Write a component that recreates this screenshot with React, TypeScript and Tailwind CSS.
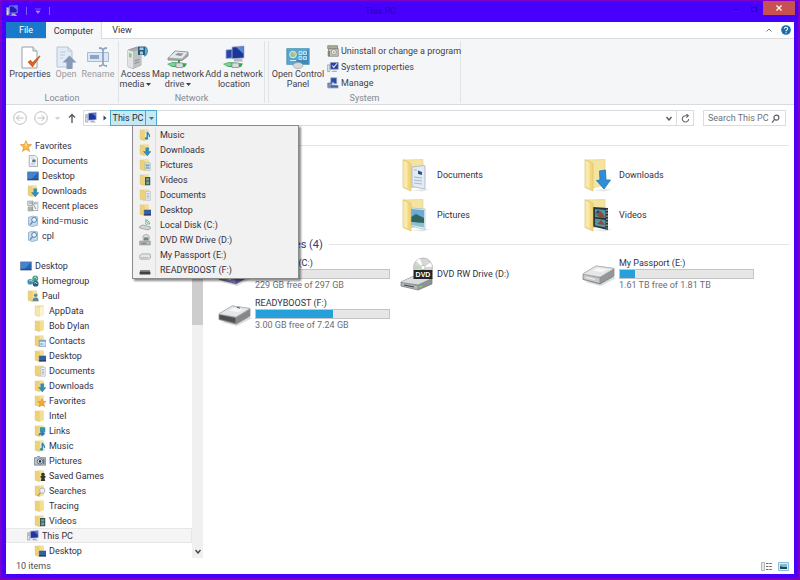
import React from 'react';

type Badge =
  | 'none'
  | 'plain'
  | 'music'
  | 'down'
  | 'picture'
  | 'video'
  | 'doc'
  | 'desktop'
  | 'contact'
  | 'star'
  | 'link'
  | 'game'
  | 'search'
  | 'user';

const BADGES: Record<Badge, React.ReactNode> = {
  none: null,
  plain: null,
  music: (
    <g>
      <path d="M8.500 3l6 1v11l-6-1z" fill="#dcecf2" />
      <path d="M11 12V4c1 2.500 3.500 3 3 6.500" fill="none" stroke="#2f7fa0" strokeWidth="1.800" />
      <ellipse cx="10" cy="12.500" rx="2.200" ry="1.800" fill="#3d8f9c" />
    </g>
  ),
  down: <path d="M9 5h4v5h3l-5 6-5-6h3z" fill="#2f8fb8" stroke="#2374a0" strokeWidth=".5" />,
  picture: (
    <g>
      <path d="M8 5h7v10H8z" fill="#e6f0f5" stroke="#8ca5b4" strokeWidth=".7" />
      <path d="M9 7h5v3H9z" fill="#6fa9c9" />
      <path d="M9 11h5v2H9z" fill="#7f9d8c" />
    </g>
  ),
  video: (
    <g>
      <path d="M8 4h7v11H8z" fill="#39535a" />
      <path d="M9.500 5.500h4v3h-4zM9.500 10h4v3.500h-4z" fill="#6fa59a" />
    </g>
  ),
  doc: (
    <g>
      <path d="M9 3h6v12H9z" fill="#eef1f5" stroke="#9aa5b5" strokeWidth=".7" />
      <path d="M10.500 6h3M10.500 8h3M10.500 10h3M10.500 12h3" stroke="#8494aa" strokeWidth=".8" />
    </g>
  ),
  desktop: (
    <g>
      <path d="M7 8h9v7H7z" fill="#2e61ae" stroke="#3e4c74" strokeWidth=".7" />
      <path d="M7 13.500h9V15H7z" fill="#30395c" />
    </g>
  ),
  contact: (
    <g>
      <path d="M7 7h9v8H7z" fill="#eaf4fb" stroke="#5f8ebc" />
      <path d="M7 7h9v2H7z" fill="#6fa3d4" />
      <path d="M9 11h2v2H9zM12.500 11h2M12.500 13h2" fill="#6fa3d4" stroke="#6fa3d4" strokeWidth=".6" />
    </g>
  ),
  star: (
    <path
      d="M10.500 5l1.500 3.500 4 .3-3 2.600 1 4-3.500-2-3.500 2 1-4-3-2.600 4-.3z"
      fill="#f4a83c"
      stroke="#c77a20"
      strokeWidth=".6"
    />
  ),
  link: (
    <g>
      <path d="M8 3h7v7H8z" fill="#3a93ad" />
      <path d="M6 15c0-4 2-5 4-5V7.500l5 4-5 4V13c-2 0-3 .5-4 2z" fill="#2f78bd" />
    </g>
  ),
  game: (
    <path
      d="M12 3.500c1.500 0 2.500 1 2.500 2.200l-.8 1.800 2.300 1.500-2 2 1 3.500H9l1-3.500-2-2 2.300-1.500-.8-1.800C9.500 4.500 10.500 3.500 12 3.500z"
      fill="#37352f"
    />
  ),
  search: (
    <g>
      <circle cx="11" cy="7.500" r="3.600" fill="#e4eef5" stroke="#a9adb0" strokeWidth="1.200" />
      <path d="M8.500 10.500L5 14.500" stroke="#b99368" strokeWidth="1.800" />
    </g>
  ),
  user: (
    <g>
      <path d="M8 4h7v11H8z" fill="#dfe6d8" />
      <circle cx="11.500" cy="7" r="2.300" fill="#6d8c78" />
      <path d="M7.500 15c0-4 1.500-5 4-5s4 1 4 5z" fill="#5b8a96" />
    </g>
  ),
};

const Folder = ({ badge = 'none' }: { badge?: Badge }) => (
  <svg viewBox="0 0 16 16" className="size-3 shrink-0" aria-hidden="true">
    <path d="M5 1h7.500v12L5 14z" fill="#f6e6a2" stroke="#dcc478" strokeWidth=".5" />
    <path d="M1.500 1l6 2v12.500l-6-2z" fill={badge === 'plain' ? '#f5e7b4' : '#edd277'} stroke="#d2b65e" strokeWidth=".5" />
    <path d="M7.500 3L13 2.300v11.500L7.500 15.500z" fill={badge === 'plain' ? '#fbf3d3' : '#f3df92'} />
    {BADGES[badge]}
  </svg>
);

const StarIcon = () => (
  <svg viewBox="0 0 16 16" className="size-3 shrink-0" aria-hidden="true">
    <path
      d="M8 .8l2 5 5.500.4-4.200 3.500 1.400 5.500L8 12.200l-4.700 3 1.400-5.500L.5 6.200 6 5.800z"
      fill="#fbbc45"
      stroke="#d98a28"
      strokeWidth=".8"
    />
    <path d="M8 3l1.200 3.400L8 9 6.600 6.500z" fill="#fde39a" />
  </svg>
);

const DesktopIcon = () => (
  <svg viewBox="0 0 16 16" className="size-3 shrink-0" aria-hidden="true">
    <path d="M.5 2.500h15v11H.5z" fill="#2a62ac" stroke="#7e94b4" />
    <path d="M1 3h14L6 12H1z" fill="#4384cb" />
    <path d="M1 11.800h14V13H1z" fill="#2b3f66" />
  </svg>
);

const DocIcon = () => (
  <svg viewBox="0 0 16 16" className="size-3 shrink-0" aria-hidden="true">
    <path d="M3 .8h8l3 3v11.500H3z" fill="#f4f7fa" stroke="#8b97a6" />
    <path d="M5 4h5M5 11h6M5 13h6" stroke="#9eacba" strokeWidth=".8" />
    <path d="M7 6h4.500v3.500H7z" fill="#55768c" />
  </svg>
);

const RecentIcon = () => (
  <svg viewBox="0 0 16 16" className="size-3 shrink-0" aria-hidden="true">
    <path d="M1 1.500h7v6H1z" fill="#e1e5e6" stroke="#8d9598" />
    <path d="M7 3h7.500v11H7z" fill="#f3f5f5" stroke="#9aa2a5" />
    <path d="M1.500 9.500h6v5h-6z" fill="#c7cdcf" stroke="#868e92" />
    <path d="M3 4h4l2 3 3 5M9 5h4M3 12h4" fill="none" stroke="#6f797d" />
  </svg>
);

const SavedSearchIcon = () => (
  <svg viewBox="0 0 16 16" className="size-3 shrink-0" aria-hidden="true">
    <path d="M2 3l6-1.500 6 1v11l-7 2-5-2z" fill="#c5dcef" stroke="#86a7c8" />
    <circle cx="9.500" cy="6.500" r="3.200" fill="#eef6fc" stroke="#4f7daa" strokeWidth="1.300" />
    <path d="M7.500 9L4 13" stroke="#6c8fb2" strokeWidth="1.700" />
  </svg>
);

const HomegroupIcon = () => (
  <svg viewBox="0 0 16 16" className="size-3 shrink-0" aria-hidden="true">
    <circle cx="4.300" cy="9" r="3.800" fill="#3d8fb4" />
    <circle cx="11" cy="4.500" r="3.900" fill="#4a9e83" />
    <circle cx="11.500" cy="11.500" r="3.900" fill="#235f80" />
    <path d="M3 8c2-2 3-1 4 1M9 4c2-2 3-1 4 1M9.500 11c2-2 3-1 4 1" fill="none" stroke="#d8eff2" strokeWidth="1.200" />
  </svg>
);

const CameraIcon = () => (
  <svg viewBox="0 0 16 16" className="size-3 shrink-0" aria-hidden="true">
    <path d="M.5 3.500h3l1-1.500h3l1 1.500h7v10H.5z" fill="#b4c3cd" stroke="#6f7f8c" />
    <circle cx="8" cy="8.500" r="3.600" fill="#f0f4f6" stroke="#3b4b57" />
    <circle cx="8" cy="8.500" r="1.700" fill="#26343f" />
    <path d="M13 5v7" stroke="#4f5f6b" strokeWidth="1.500" />
  </svg>
);

const PcIcon = ({ screen = '#20369e' }: { screen?: string }) => (
  <svg viewBox="0 0 16 16" className="size-3 shrink-0" aria-hidden="true">
    <path d="M.8 3.500h3v10h-3z" fill="#dfe3ea" stroke="#8a90a4" strokeWidth=".8" />
    <path d="M1.500 5.500h1.600M1.500 7h1.600" stroke="#6d758e" strokeWidth=".7" />
    <path d="M4.500 1.500L15 .8v9.500l-10.500.7z" fill={screen} stroke="#b7bdd8" strokeWidth=".8" />
    <path d="M9 1.700l5.500-.4v5z" fill="#5a7fd8" />
    <path d="M8 11.300h4l1.500 2.500H7z" fill="#a9b0c4" />
    <path d="M4 14.200l9.500-.4 1.500 1H5z" fill="#c9cddb" />
  </svg>
);

const LocalDiskIcon = () => (
  <svg viewBox="0 0 16 16" className="size-3 shrink-0" aria-hidden="true">
    <path d="M1 10l4-2 10 2.500v2.500l-3 1.500L1 12z" fill="#d5d8da" stroke="#7c8286" strokeWidth=".8" />
    <path d="M8 6c1 0 2 .8 2 2M8 3.500c2.500 0 4 1.500 4 4M8 1.200c4 0 6 2.500 6 6" fill="none" stroke="#3da353" strokeWidth="1.100" />
  </svg>
);

const DvdSmallIcon = () => (
  <svg viewBox="0 0 16 16" className="size-3 shrink-0" aria-hidden="true">
    <circle cx="9.500" cy="5" r="4.500" fill="#d8dcdd" stroke="#8c9396" strokeWidth=".8" />
    <path d="M6.500 4.500h6v3.500h-6z" fill="#7b8285" />
    <path d="M1 9.500h14v5H1z" fill="#b9bec1" stroke="#777e82" strokeWidth=".8" />
    <path d="M3 12.300h7" stroke="#51575b" />
  </svg>
);

const PassportSmallIcon = () => (
  <svg viewBox="0 0 16 16" className="size-3 shrink-0" aria-hidden="true">
    <path d="M1 8.500l3-2h10.500l.7 2V12l-2 1.500H2L1 12z" fill="#e3e5e6" stroke="#8b9093" strokeWidth=".9" />
    <path d="M2.500 11.500h10" stroke="#abb0b3" />
  </svg>
);

const StickSmallIcon = () => (
  <svg viewBox="0 0 16 16" className="size-3 shrink-0" aria-hidden="true">
    <path d="M2.500 8h11l1.700 2.500V14H.8v-3.500z" fill="#3e4144" />
    <path d="M2.500 8h11l1.500 2.300H1z" fill="#85898c" />
  </svg>
);

/* ---------- ribbon drawings ---------- */

const PropertiesIcon = () => (
  <svg viewBox="0 0 24 24" className="size-6" aria-hidden="true">
    <path d="M4 2h11l4 4v17H4z" fill="#fff" stroke="#9aa0a6" />
    <path d="M15 2v4h4" fill="#e8ebee" stroke="#9aa0a6" />
    <path d="M10.500 17l4 4.500L22 11l-7.500 7-2-2.500z" fill="#dd7038" stroke="#c4602e" strokeWidth="1.200" />
  </svg>
);

const OpenIcon = () => (
  <svg viewBox="0 0 24 24" className="size-6" aria-hidden="true">
    <path d="M3 2h11l4 4v16H3z" fill="#e2ebf6" stroke="#b4c4da" />
    <path d="M14 2v4h4M6 7h6M6 10h5M6 13h3" fill="none" stroke="#b9c8dc" />
    <path d="M15.500 10.500l7 7h-4V24h-6v-6.500h-4z" fill="#8599b8" />
  </svg>
);

const RenameIcon = () => (
  <svg viewBox="0 0 24 24" className="size-6" aria-hidden="true">
    <path d="M1.500 7.500h21v9h-21z" fill="#dbe7f4" stroke="#a9bcd4" />
    <path d="M4 10h9v4H4z" fill="#8ca5c6" />
    <path d="M13 3c2 0 3 .3 4 1.500C18 3.300 19 3 21 3M17 4.500v15M13 21c2 0 3-.3 4-1.500 1 1.200 2 1.500 4 1.500" fill="none" stroke="#8da4c4" strokeWidth="1.800" />
  </svg>
);

const AccessMediaIcon = () => (
  <svg viewBox="0 0 24 24" className="size-6" aria-hidden="true">
    <path d="M4 5l9-3 4 2v16l-8 3.500-5-2z" fill="#a9acae" stroke="#85888a" strokeWidth=".7" />
    <path d="M4 5l5 1.500v17l-5-2z" fill="#e1e3e4" />
    <path d="M9 6.500L17 4v16l-8 3.500z" fill="#bfc2c3" />
    <path d="M10.500 16l5-1.700M10.500 18.500l5-1.700" stroke="#8a8d8f" />
    <path d="M5 8l2.500.8v4L5 12z" fill="#8fc08d" />
    <path d="M14 1.500h7.500v8.500H14z" fill="#27597c" />
    <path d="M15.500 2.500h4v2.500h-4zM16 6.500h3v3h-3z" fill="#a8cbdc" />
    <path d="M21 2c3 2 3 7-1 9" fill="none" stroke="#4b9bbb" strokeWidth="1.800" />
  </svg>
);

const MapDriveIcon = () => (
  <svg viewBox="0 0 24 24" className="size-6" aria-hidden="true">
    <path d="M2 13l7-7 13 1v4L16 15.500 2 15z" fill="#a5a9ab" stroke="#85898c" strokeWidth=".8" />
    <path d="M2.500 12.500l7-6 12 1L16 13.500z" fill="#e6e8e9" />
    <path d="M9 10l2.500-2 6 .5-2.500 2.500z" fill="#8f9598" />
    <path d="M13 15v4" stroke="#4f8d60" strokeWidth="2" />
    <path d="M1 19l6-2 14 1.500-2 3.500H6z" fill="#35a560" />
    <path d="M2 19l6-1.500 4 2.500-6 1.500z" fill="#7fcf98" />
    <path d="M10 18h7v4.500h-7z" fill="#d9dddb" stroke="#7d8b83" strokeWidth=".7" />
  </svg>
);

const AddNetworkIcon = () => (
  <svg viewBox="0 0 24 24" className="size-6" aria-hidden="true">
    <path d="M4 5l8-1v9l-8 .5z" fill="#2446ae" stroke="#aab3d0" strokeWidth=".8" />
    <path d="M10 2l12-1v12l-12 .8z" fill="#1b3795" stroke="#b5bdd6" strokeWidth=".8" />
    <path d="M14 2l7.500-.5V9z" fill="#5d86dd" />
    <path d="M12 14h8l1 2.500h-9z" fill="#b5bac8" />
    <path d="M1 19l6-2 14 1.500-2 3.500H6z" fill="#35a560" />
    <path d="M2 19l6-1.500 4 2.500-6 1.500z" fill="#7fcf98" />
    <path d="M10 18h7v4.500h-7z" fill="#d9dddb" stroke="#7d8b83" strokeWidth=".7" />
  </svg>
);

const ControlPanelIcon = () => (
  <svg viewBox="0 0 24 24" className="size-6" aria-hidden="true">
    <path d="M.8 3.500h22.400v16H.8z" fill="#3c8bbb" stroke="#6ba6c4" />
    <path d="M1.500 4h21L8 19H1.500z" fill="#56a6cf" />
    <circle cx="7" cy="9.500" r="3.300" fill="#8bc2a5" stroke="#e3efd7" />
    <path d="M7 9.500V6.200a3.300 3.300 0 0 1 3.300 3.300z" fill="#e9c46d" />
    <path d="M13 6.500h3v3h-3zM17.500 6.500h3v3h-3zM13 11.500h3v3h-3zM17.500 11.500h3v3h-3z" fill="#5fb3dd" stroke="#d5edf7" strokeWidth=".8" />
    <path d="M4 15.500h6" stroke="#d5edf7" />
    <ellipse cx="12" cy="20.500" rx="5" ry="3" fill="#d6dadd" stroke="#9ba1a5" strokeWidth=".7" />
  </svg>
);

const UninstallIcon = () => (
  <svg viewBox="0 0 16 16" className="size-3 shrink-0" aria-hidden="true">
    <path d="M1 1h13v4H1z" fill="#aab08f" stroke="#76786f" />
    <path d="M2 5h13v10H2z" fill="#c9c8bf" stroke="#7d7b73" />
    <circle cx="9" cy="9.500" r="3.500" fill="#ecece6" stroke="#85837b" />
    <circle cx="9" cy="9.500" r="1" fill="#7d7b73" />
    <path d="M1 8h3v7H1z" fill="#85837b" />
  </svg>
);

const SysPropsIcon = () => (
  <svg viewBox="0 0 16 16" className="size-3 shrink-0" aria-hidden="true">
    <path d="M.8 5h3v9h-3z" fill="#dfe3ea" stroke="#8a90a4" strokeWidth=".8" />
    <path d="M4.500 2H15v9H4.500z" fill="#2840a8" stroke="#8f99bd" strokeWidth=".9" />
    <path d="M7 6l2 2.500L13.500 3" fill="none" stroke="#e4ebfb" strokeWidth="1.400" />
    <path d="M7 13h6v1.500H6z" fill="#a9b0c4" />
  </svg>
);

const ManageIcon = () => (
  <svg viewBox="0 0 16 16" className="size-3 shrink-0" aria-hidden="true">
    <path d="M5 1h8v8H5z" fill="#2a4ca5" stroke="#9fabc9" />
    <path d="M1 8h5v6H1z" fill="#7f93ba" stroke="#536a97" strokeWidth=".8" />
    <path d="M8 6l3 5H6z" fill="#c7d7ef" />
    <path d="M5 11h10v3.500H5z" fill="#49649c" />
    <path d="M1 15h14" stroke="#b2bed5" />
  </svg>
);

/* ---------- large item drawings ---------- */

const BigFolder = ({ kind }: { kind: 'doc' | 'down' | 'picture' | 'video' | 'music' | 'desktop' }) => (
  <svg viewBox="0 0 32 36" className="h-9 w-8" aria-hidden="true">
    <path d="M3 3l19-.5v25L10 31z" fill="#f5e3a0" stroke="#e3cc80" strokeWidth=".6" />
    <path d="M10 33l20-1-9 2.500z" fill="#e4e4e4" />
    {kind === 'doc' && (
      <g>
        <path d="M11 10l12-1.500 1 .5v23l-13-2.500z" fill="#e3eaf4" stroke="#a4b2c6" strokeWidth=".8" />
        <path d="M13 20l8 1M13 23l8 1M13 26l8 1M13 13h3" stroke="#a9b7cb" />
        <path d="M17 13.500l4 1.500v3l-4-1z" fill="#2c527e" />
      </g>
    )}
    {kind === 'picture' && (
      <g>
        <path d="M10 11l14 1v20.500L10 29z" fill="#e7f2f8" stroke="#9db9c8" strokeWidth=".7" />
        <path d="M10 12l13 1v10l-13-1z" fill="#6aaad4" />
        <path d="M10 20l5-3 8 4v6.500L10 25z" fill="#2f6660" />
        <path d="M10 25l13 1v4.500L10 28z" fill="#8cc0cc" />
      </g>
    )}
    {kind === 'video' && (
      <g>
        <path d="M10 10l15 1v22l-15-3.500z" fill="#283238" />
        <path d="M12 12l10.500 1v8L12 20zM12 21.500l10.500 1.500v7.500L12 28.500z" fill="#4e9b9f" />
        <path d="M13 18l5-4 4 6-4 1zM14 27l4-4 4 5z" fill="#8d4a40" />
        <path d="M12 17l3-4 2 2z" fill="#2b3d43" />
        <path d="M24 12.500v19" stroke="#d6dddf" strokeDasharray="1.500 1.500" />
      </g>
    )}
    {kind === 'music' && <path d="M14 28V12l8 4v6" fill="none" stroke="#3b8ab4" strokeWidth="2.500" />}
    {kind === 'desktop' && <path d="M10 17h15v12H10z" fill="#2e6bb5" />}
    <path d="M2 2.500l8 4V34l-8-3.500z" fill="#f1d77f" stroke="#d9bd66" strokeWidth=".6" />
    <path d="M2.500 3.500l4 2v26l-4-1.800z" fill="#fae9a8" />
    {kind === 'down' && (
      <path d="M16.500 14l6-1 .5 10h4.500L21 32l-7.500-8.500 3.500-.5z" fill="#2f8fd6" stroke="#1f74b8" strokeWidth=".8" />
    )}
  </svg>
);

const DriveIcon = ({ dark = false, blue = false }: { dark?: boolean; blue?: boolean }) => (
  <svg viewBox="0 0 36 24" className="h-6 w-9" aria-hidden="true">
    <path d="M4 20l16 4 15-8-2-1z" fill="#dcdcdc" />
    <path d="M2 12L15 4l18 2.500v7.500L19 22 2 17.500z" fill={blue ? '#4f4d92' : '#8f9295'} stroke="#77797b" strokeWidth=".7" />
    <path d="M2 12L15 4l18 2.500L19 15z" fill={blue ? '#b5b6dc' : '#e6e7e8'} stroke="#b4b6b8" strokeWidth=".6" />
    <path d="M2.500 12.800L18.500 16v5L2.500 17z" fill={dark ? '#4d4f51' : blue ? '#7a79ae' : '#c7cacc'} />
    <path d="M19.500 15.500L32.500 8v5.500l-13 7.500z" fill={dark ? '#85888a' : blue ? '#5c5a9c' : '#94989b'} />
    <path d="M12 8.500l5-2.500 9 1.300-5 3z" fill={blue ? '#cfd0ea' : '#f6f7f7'} />
    {dark ? <path d="M20 5.500l3 .5" stroke="#555" /> : <path d="M5 15.500l9 2" stroke="#f4f5f5" />}
  </svg>
);

const DvdDriveIcon = () => (
  <svg viewBox="0 0 36 36" className="size-9" aria-hidden="true">
    <path d="M2 26l13-6 18 2v6l-14 6-17-4z" fill="#8f9295" stroke="#737577" strokeWidth=".7" />
    <path d="M2 26l13-6 18 2-14 6.500z" fill="#d9dbdc" />
    <path d="M2.500 27l16 3v3.500l-16-4z" fill="#b4b7b9" />
    <path d="M5 29l10 2" stroke="#3c3f41" />
    <path d="M20 31.300l3-1.300" stroke="#7dd45c" strokeWidth="1.500" />
    <circle cx="24" cy="11.500" r="9.500" fill="#d3d7d5" stroke="#a4a8a6" strokeWidth=".7" />
    <path d="M24 11.500L17 5l4-2.500zM24 11.500l8-5 1 4z" fill="#fff" />
    <path d="M24 11.500l-8.500 2 0-4z" fill="#bcd8b9" />
    <circle cx="24" cy="11.500" r="2.200" fill="#fff" stroke="#a9adab" strokeWidth=".7" />
    <path d="M14.500 14h19v9h-19z" fill="#252526" />
    <text x="24" y="21" textAnchor="middle" fontSize="7" fontWeight="bold" fill="#fff" fontFamily="Liberation Sans, sans-serif">
      DVD
    </text>
  </svg>
);

/* ---------- data ---------- */

interface TreeNode {
  label: string;
  icon: React.ReactNode;
  level: 0 | 1 | 2;
  selected?: boolean;
}

const FAVORITES: TreeNode[] = [
  { label: 'Favorites', icon: <StarIcon />, level: 0 },
  { label: 'Documents', icon: <DocIcon />, level: 1 },
  { label: 'Desktop', icon: <DesktopIcon />, level: 1 },
  { label: 'Downloads', icon: <Folder badge="down" />, level: 1 },
  { label: 'Recent places', icon: <RecentIcon />, level: 1 },
  { label: 'kind=music', icon: <SavedSearchIcon />, level: 1 },
  { label: 'cpl', icon: <SavedSearchIcon />, level: 1 },
];

const DESKTOP_TREE: TreeNode[] = [
  { label: 'Desktop', icon: <DesktopIcon />, level: 0 },
  { label: 'Homegroup', icon: <HomegroupIcon />, level: 1 },
  { label: 'Paul', icon: <Folder badge="user" />, level: 1 },
  { label: 'AppData', icon: <Folder badge="plain" />, level: 2 },
  { label: 'Bob Dylan', icon: <Folder />, level: 2 },
  { label: 'Contacts', icon: <Folder badge="contact" />, level: 2 },
  { label: 'Desktop', icon: <Folder badge="desktop" />, level: 2 },
  { label: 'Documents', icon: <Folder badge="doc" />, level: 2 },
  { label: 'Downloads', icon: <Folder badge="down" />, level: 2 },
  { label: 'Favorites', icon: <Folder badge="star" />, level: 2 },
  { label: 'Intel', icon: <Folder />, level: 2 },
  { label: 'Links', icon: <Folder badge="link" />, level: 2 },
  { label: 'Music', icon: <Folder badge="music" />, level: 2 },
  { label: 'Pictures', icon: <CameraIcon />, level: 2 },
  { label: 'Saved Games', icon: <Folder badge="game" />, level: 2 },
  { label: 'Searches', icon: <Folder badge="search" />, level: 2 },
  { label: 'Tracing', icon: <Folder />, level: 2 },
  { label: 'Videos', icon: <Folder badge="video" />, level: 2 },
  { label: 'This PC', icon: <PcIcon />, level: 1, selected: true },
  { label: 'Desktop', icon: <Folder badge="desktop" />, level: 2 },
];

const MENU_ITEMS = [
  { label: 'Music', icon: <Folder badge="music" /> },
  { label: 'Downloads', icon: <Folder badge="down" /> },
  { label: 'Pictures', icon: <Folder badge="picture" /> },
  { label: 'Videos', icon: <Folder badge="video" /> },
  { label: 'Documents', icon: <Folder badge="doc" /> },
  { label: 'Desktop', icon: <Folder badge="desktop" /> },
  { label: 'Local Disk (C:)', icon: <LocalDiskIcon /> },
  { label: 'DVD RW Drive (D:)', icon: <DvdSmallIcon /> },
  { label: 'My Passport (E:)', icon: <PassportSmallIcon /> },
  { label: 'READYBOOST (F:)', icon: <StickSmallIcon /> },
];

const FOLDERS = [
  { label: 'Desktop', icon: <BigFolder kind="desktop" /> },
  { label: 'Documents', icon: <BigFolder kind="doc" /> },
  { label: 'Downloads', icon: <BigFolder kind="down" /> },
  { label: 'Music', icon: <BigFolder kind="music" /> },
  { label: 'Pictures', icon: <BigFolder kind="picture" /> },
  { label: 'Videos', icon: <BigFolder kind="video" /> },
];

const DRIVES = [
  { label: 'Local Disk (C:)', icon: <DriveIcon blue />, used: 23, free: '229 GB free of 297 GB' },
  { label: 'DVD RW Drive (D:)', icon: <DvdDriveIcon /> },
  { label: 'My Passport (E:)', icon: <DriveIcon />, used: 11, free: '1.61 TB free of 1.81 TB' },
  { label: 'READYBOOST (F:)', icon: <DriveIcon dark />, used: 58, free: '3.00 GB free of 7.24 GB' },
];

const INDENT = {
  0: 'pl-[14px]',
  1: 'pl-[21px]',
  2: 'pl-[28px]',
};

/* ---------- parts ---------- */

const TitleBar = () => (
  <header className="flex h-[21px] shrink-0 items-start pr-[3px]">
    <div className="flex h-5 items-center gap-2 pl-1">
      <PcIcon screen="#2417c0" />
      <span className="h-2 w-px bg-[#7c5cff]" />
      <button aria-label="Customize Quick Access Toolbar">
        <svg viewBox="0 0 6 6" className="size-1.5" aria-hidden="true">
          <path d="M0 1h6M1 3h4L3 5.500z" fill="#a48cff" stroke="#a48cff" strokeWidth=".6" />
        </svg>
      </button>
      <span className="h-2 w-px bg-[#7c5cff]" />
    </div>
    <h1 className="flex-1 pr-4 text-center leading-5 text-[#2800b8]">This PC</h1>
    <button aria-label="Minimize" className="flex h-4 w-[18px] items-center justify-center">
      <span className="h-px w-1.5 bg-[#2800b8]" />
    </button>
    <button aria-label="Maximize" className="flex h-4 w-[18px] items-center justify-center">
      <span className="h-[5px] w-1.5 border border-[#2800b8]" />
    </button>
    <button aria-label="Close" className="flex h-[14px] w-8 items-center justify-center bg-[#c75050]">
      <svg viewBox="0 0 6 6" className="size-1.5" aria-hidden="true">
        <path d="M.5.5l5 5M5.500.5l-5 5" stroke="#fff" strokeWidth="1.200" />
      </svg>
    </button>
  </header>
);

const TabStrip = () => (
  <nav className="flex h-4 shrink-0 items-stretch bg-white">
    <button className="w-10 bg-[#1979ca] text-white">File</button>
    <button className="relative z-10 -mb-px w-14 border-r border-[#dadbdc] bg-[#f5f6f7]">Computer</button>
    <button className="w-10">View</button>
    <div className="ml-auto flex items-center gap-2 pr-[3px]">
      <button aria-label="Minimize the Ribbon">
        <svg viewBox="0 0 8 8" className="size-2" aria-hidden="true">
          <path d="M1.500 5.500L4 3l2.500 2.500" fill="none" stroke="#7a7a7a" />
        </svg>
      </button>
      <button aria-label="Help">
        <svg viewBox="0 0 12 12" className="size-[10px]" aria-hidden="true">
          <circle cx="6" cy="6" r="5.800" fill="#1b6cab" />
          <path d="M4 4.500C4 2 8 2 8 4.500 8 6 6 6 6 7.500M6 8.700v1.300" fill="none" stroke="#fff" strokeWidth="1.300" />
        </svg>
      </button>
    </div>
  </nav>
);

const Caret = () => (
  <svg viewBox="0 0 5 3" className="ml-0.5 inline-block h-[3px] w-[5px] align-middle" aria-hidden="true">
    <path d="M0 0h5L2.500 3z" fill="#3c3c46" />
  </svg>
);

interface RibbonButtonProps {
  icon: React.ReactNode;
  width: string;
  disabled?: boolean;
  children: React.ReactNode;
}

const RibbonButton: React.FC<RibbonButtonProps> = ({ icon, width, disabled, children }) => (
  <button
    disabled={disabled}
    className={`flex shrink-0 flex-col items-center leading-[10px] whitespace-nowrap ${width} ${
      disabled ? 'text-[#9a9aa2]' : 'text-[#3f3f4b]'
    }`}
  >
    {icon}
    <span>{children}</span>
  </button>
);

const RibbonGroup = ({ label, className, children }: { label: string; className: string; children: React.ReactNode }) => (
  <section aria-label={label} className={`mt-0.5 mb-px flex flex-col border-r border-[#e2e3e4] ${className}`}>
    <div className="flex flex-1 items-start pt-1">{children}</div>
    <p className="text-center leading-[10px] text-[#85878f]">{label}</p>
  </section>
);

const Ribbon = () => (
  <div className="flex h-[67px] shrink-0 border-y border-[#dadbdc] bg-[#f5f6f7]">
    <RibbonGroup label="Location" className="w-[113px]">
      <RibbonButton icon={<PropertiesIcon />} width="w-12">Properties</RibbonButton>
      <RibbonButton icon={<OpenIcon />} width="w-6" disabled>Open</RibbonButton>
      <RibbonButton icon={<RenameIcon />} width="w-10" disabled>Rename</RibbonButton>
    </RibbonGroup>
    <RibbonGroup label="Network" className="w-[146px]">
      <RibbonButton icon={<AccessMediaIcon />} width="w-[33px]">
        Access<br />media<Caret />
      </RibbonButton>
      <RibbonButton icon={<MapDriveIcon />} width="w-[52px]">
        Map network<br />drive<Caret />
      </RibbonButton>
      <RibbonButton icon={<AddNetworkIcon />} width="w-[60px]">
        Add a network<br />location
      </RibbonButton>
    </RibbonGroup>
    <RibbonGroup label="System" className="ml-[3px] w-[193px] border-l">
      <RibbonButton icon={<ControlPanelIcon />} width="w-[58px]">
        Open Control<br />Panel
      </RibbonButton>
      <div className="flex flex-col gap-1 whitespace-nowrap text-[#3f3f4b]">
        <button className="flex h-3 items-center gap-0.5"><UninstallIcon />Uninstall or change a program</button>
        <button className="flex h-3 items-center gap-0.5"><SysPropsIcon />System properties</button>
        <button className="flex h-3 items-center gap-0.5"><ManageIcon />Manage</button>
      </div>
    </RibbonGroup>
  </div>
);

const LocationMenu = () => (
  <div
    role="menu"
    className="absolute top-full left-[21px] z-20 w-[167px] border border-[#8a8a8a] bg-[#f1f1f1] py-px shadow-[2px_2px_2px_rgba(0,0,0,0.45)]"
  >
    {MENU_ITEMS.map((item) => (
      <button key={item.label} role="menuitem" className="flex h-[15px] w-full items-stretch text-left">
        <span className="flex w-[23px] items-center justify-end border-r border-[#dedede] pr-1">{item.icon}</span>
        <span className="pl-1 leading-4">{item.label}</span>
      </button>
    ))}
  </div>
);

const AddressBar = () => (
  <div className="flex shrink-0 items-center bg-white pt-[5px] pr-2 pb-1 pl-[7px]">
    <div className="flex w-[70px] items-center gap-[7px]">
      <button aria-label="Back">
        <svg viewBox="0 0 14 14" className="size-[14px]" fill="none" stroke="#bdbdbd" aria-hidden="true">
          <circle cx="7" cy="7" r="6.300" />
          <path d="M10.500 7h-7M6.500 4l-3 3 3 3" />
        </svg>
      </button>
      <button aria-label="Forward">
        <svg viewBox="0 0 14 14" className="size-[14px]" fill="none" stroke="#bdbdbd" aria-hidden="true">
          <circle cx="7" cy="7" r="6.300" />
          <path d="M3.500 7h7M7.500 4l3 3-3 3" />
        </svg>
      </button>
      <button aria-label="Recent locations">
        <svg viewBox="0 0 5 3" className="h-[3px] w-[5px]" aria-hidden="true">
          <path d="M0 0h5L2.500 3z" fill="#cfcfcf" />
        </svg>
      </button>
      <button aria-label="Up">
        <svg viewBox="0 0 10 10" className="size-[10px]" fill="none" stroke="#5a5a5a" strokeWidth="1.400" aria-hidden="true">
          <path d="M5 10V1.500M2 4.500l3-3 3 3" />
        </svg>
      </button>
    </div>
    <div className="flex h-4 flex-1 border border-[#dcdcdc]">
      <span className="flex w-[26px] items-center gap-1.5 pl-px">
        <PcIcon />
        <svg viewBox="0 0 4 6" className="h-1.5 w-1 shrink-0" aria-hidden="true">
          <path d="M.5.5v5L3.500 3z" fill="#444" />
        </svg>
      </span>
      <div className="relative -my-px flex h-4 border border-[#4fa9cf] bg-[#c5e8f5]">
        <button className="w-[34px] leading-[14px] text-[#1e2b38]">This PC</button>
        <button
          aria-label="Show locations"
          aria-expanded="true"
          className="flex w-[11px] items-center justify-center border-l border-[#4fa9cf]"
        >
          <svg viewBox="0 0 5 3" className="h-[3px] w-[5px]" aria-hidden="true">
            <path d="M0 0h5L2.500 3z" fill="#4a6c7c" />
          </svg>
        </button>
        <LocationMenu />
      </div>
      <button aria-label="Previous locations" className="ml-auto flex w-[14px] items-center justify-center">
        <svg viewBox="0 0 6 5" className="h-[5px] w-1.5" fill="none" stroke="#5a5a5a" strokeWidth="1.400" aria-hidden="true">
          <path d="M.5 1L3 4l2.500-3" />
        </svg>
      </button>
      <button aria-label="Refresh" className="flex w-[17px] items-center justify-center border-l border-[#dcdcdc]">
        <svg viewBox="0 0 10 10" className="size-[9px]" fill="none" stroke="#666" strokeWidth="1.200" aria-hidden="true">
          <path d="M8.500 5.500A3.500 3.500 0 1 1 5.500 2H8M6 0l2.200 2L6 4" />
        </svg>
      </button>
    </div>
    <form className="ml-[9px] flex h-4 w-[83px] items-center border border-[#dcdcdc] pr-[5px] pl-1">
      <input
        aria-label="Search This PC"
        placeholder="Search This PC"
        className="min-w-0 flex-1 bg-transparent outline-none placeholder:text-[#6f6f79]"
      />
      <svg viewBox="0 0 10 10" className="size-[9px]" fill="none" stroke="#5d5d66" strokeWidth="1.300" aria-hidden="true">
        <circle cx="6" cy="4" r="2.800" />
        <path d="M4 6L1 9.500" />
      </svg>
    </form>
  </div>
);

const TreeRow = ({ node }: { node: TreeNode }) => (
  <li className={node.selected ? 'bg-[#f5f5f5] outline -outline-offset-1 outline-[#e6e6e6]' : ''}>
    <button className={`flex h-[15px] w-full items-center gap-[3px] text-left whitespace-nowrap ${INDENT[node.level]}`}>
      {node.icon}
      {node.label}
    </button>
  </li>
);

const Sidebar = () => (
  <aside className="flex w-[197px] shrink-0 overflow-hidden">
    <nav aria-label="Navigation pane" className="flex-1 pt-2">
      <ul>{FAVORITES.map((n, i) => <TreeRow key={i} node={n} />)}</ul>
      <ul className="mt-[15px]">{DESKTOP_TREE.map((n, i) => <TreeRow key={i} node={n} />)}</ul>
    </nav>
    <div className="flex w-[11px] flex-col items-center bg-[#f0f0f0]">
      <svg viewBox="0 0 6 5" className="my-1 h-[5px] w-1.5" fill="none" stroke="#555" strokeWidth="1.400" aria-hidden="true">
        <path d="M.5 4L3 1l2.500 3" />
      </svg>
      <div className="h-[182px] w-full bg-[#cdcdcd]" />
      <svg viewBox="0 0 6 5" className="mt-auto mb-1 h-[5px] w-1.5" fill="none" stroke="#444" strokeWidth="1.400" aria-hidden="true">
        <path d="M.5 1L3 4l2.500-3" />
      </svg>
    </div>
  </aside>
);

const SectionHeading = ({ children }: { children: React.ReactNode }) => (
  <h2 className="flex h-[19px] items-center gap-1.5 pl-0.5 text-[11px] text-[#3a3a7c] after:h-px after:flex-1 after:bg-[#e4e4e4]">
    {children}
  </h2>
);

const FilePane = () => (
  <main className="min-w-0 flex-1 overflow-hidden bg-white pt-[6px] pr-[5px] pl-[10px]">
    <SectionHeading>Folders (6)</SectionHeading>
    <div className="grid grid-cols-[repeat(auto-fill,182px)] pl-1">
      {FOLDERS.map((f) => (
        <button key={f.label} className="flex h-10 items-center gap-0.5 text-left">
          <span className="flex w-9 shrink-0 pl-0.5">{f.icon}</span>
          {f.label}
        </button>
      ))}
    </div>
    <SectionHeading>Devices and drives (4)</SectionHeading>
    <div className="grid grid-cols-[repeat(auto-fill,182px)] pl-1">
      {DRIVES.map((d) => (
        <button key={d.label} className="flex h-10 items-center gap-0.5 text-left">
          <span className="flex w-9 shrink-0">{d.icon}</span>
          {d.free ? (
            <span className="flex w-[135px] flex-col">
              <span className="leading-3">{d.label}</span>
              <span className="flex h-[10px] border border-[#c4c4c4] bg-[#e6e6e6]">
                <span className="bg-[#26a0da]" style={{ width: `${d.used}%` }} />
              </span>
              <span className="leading-3 text-[#6d6d75]">{d.free}</span>
            </span>
          ) : (
            <span>{d.label}</span>
          )}
        </button>
      ))}
    </div>
  </main>
);

const StatusBar = () => (
  <footer className="flex h-4 shrink-0 items-center justify-between bg-white pr-[5px] pl-[10px] text-[#4c4c58]">
    <span>10 items</span>
    <div className="flex items-center gap-1.5">
      <button aria-label="Details view">
        <svg viewBox="0 0 11 9" className="h-[9px] w-[11px]" aria-hidden="true">
          <path d="M.5.5h3v8h-3z" fill="#e4e8e8" stroke="#a4abab" strokeWidth=".8" />
          <path d="M5 1.500h6M5 4.500h6M5 7.500h6" stroke="#666" strokeDasharray="2.500 .8" />
        </svg>
      </button>
      <button aria-label="Large icons view">
        <svg viewBox="0 0 11 9" className="h-[9px] w-[11px]" aria-hidden="true">
          <path d="M.5.5h10v8H.5z" fill="#d9eef8" stroke="#86c0dc" />
          <path d="M2 2h7v5H2z" fill="#8fb7cc" />
          <path d="M2 4l3 1h4v2H2z" fill="#24485a" />
        </svg>
      </button>
    </div>
  </footer>
);

export default function App() {
  return (
    <div className="flex h-screen flex-col border-x-2 border-t border-b-2 border-[#7d00c6] bg-[#4600fc] font-['Roboto','Noto_Sans',sans-serif] text-[9px] leading-3 text-[#33303f]">
      <TitleBar />
      <div className="mx-1 mb-1 flex min-h-0 flex-1 flex-col bg-white">
        <TabStrip />
        <Ribbon />
        <AddressBar />
        <div className="flex min-h-0 flex-1">
          <Sidebar />
          <FilePane />
        </div>
        <StatusBar />
      </div>
    </div>
  );
}
